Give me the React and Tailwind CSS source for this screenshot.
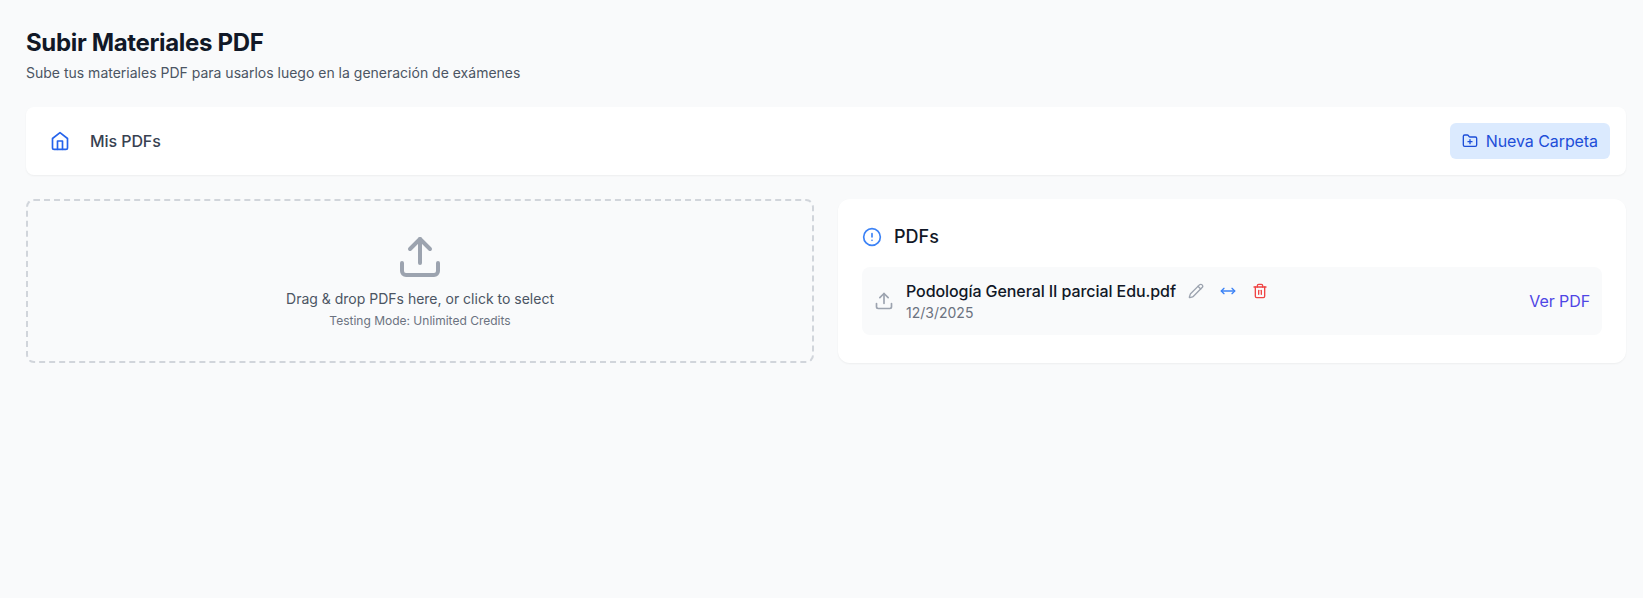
import React from 'react';
import { AlertCircle, FolderPlus, MoveHorizontal, Pencil, Trash2, Upload } from 'lucide-react';

const files = [
  { id: 1, name: 'Podología General II parcial Edu.pdf', date: '12/3/2025' },
];

const HomeIcon = ({ className }) => (
  <svg
    className={className}
    viewBox="0 0 24 24"
    fill="none"
    stroke="currentColor"
    strokeWidth="2"
    strokeLinecap="round"
    strokeLinejoin="round"
  >
    <path d="m3 9 9-7 9 7v11a2 2 0 0 1-2 2H5a2 2 0 0 1-2-2z" />
    <polyline points="9 22 9 12 15 12 15 22" />
  </svg>
);

const FileRow = ({ file }) => (
  <div className="flex items-center justify-between p-3 bg-[#f9fafb] rounded-lg">
    <div className="flex items-center">
      <Upload className="h-5 w-5 mr-3 text-[#9ca3af]" />
      <div>
        <div className="flex items-center gap-2">
          <span className="font-medium tracking-[-0.08px] text-[#111827]">{file.name}</span>
          <button className="px-1 text-[#9ca3af]">
            <Pencil className="h-4 w-4" />
          </button>
          <button className="px-1 text-[#3b82f6]">
            <MoveHorizontal className="h-4 w-4" />
          </button>
          <button className="px-1 text-[#ef4444]">
            <Trash2 className="h-4 w-4" />
          </button>
        </div>
        <p className="text-sm text-[#6b7280]">{file.date}</p>
      </div>
    </div>
    <button className="tracking-[-0.08px] text-[#4f46e5]">Ver PDF</button>
  </div>
);

const App = () => {
  return (
    <div className="min-h-screen bg-[#f9fafb] pt-[27px] pl-[26px] pr-[17px] font-['Inter',sans-serif]">
      <div className="mb-6">
        <h1 className="text-2xl font-bold tracking-[-0.34px] text-[#111827]">Subir Materiales PDF</h1>
        <p className="mt-1 text-sm text-[#4b5563]">
          Sube tus materiales PDF para usarlos luego en la generación de exámenes
        </p>
      </div>

      <div className="mb-6 flex items-center justify-between bg-white p-4 rounded-lg shadow-xs">
        <div className="flex items-center gap-3">
          <button className="p-2 text-[#2563eb]">
            <HomeIcon className="h-5 w-5" />
          </button>
          <span className="font-medium tracking-[-0.08px] text-[#374151]">Mis PDFs</span>
        </div>
        <button className="flex items-center px-3 py-1.5 bg-[#dbeafe] tracking-[-0.08px] text-[#1d4ed8] rounded-md">
          <FolderPlus className="h-4 w-4 mr-2" />
          Nueva Carpeta
        </button>
      </div>

      <div className="grid grid-cols-2 gap-6">
        <div className="border-2 border-dashed border-[#d1d5db] rounded-lg p-8 text-center">
          <Upload className="mx-auto h-12 w-12 text-[#9ca3af]" />
          <p className="mt-2 text-sm text-[#4b5563]">Drag &amp; drop PDFs here, or click to select</p>
          <p className="mt-1 text-xs text-[#6b7280]">Testing Mode: Unlimited Credits</p>
        </div>

        <div className="bg-white rounded-xl shadow-xs p-6">
          <h2 className="mb-4 flex items-center text-lg font-medium text-[#111827]">
            <AlertCircle className="h-5 w-5 mr-3 text-[#3b82f6]" />
            PDFs
          </h2>
          {files.map(file => (
            <FileRow key={file.id} file={file} />
          ))}
        </div>
      </div>
    </div>
  );
};

export default App;
